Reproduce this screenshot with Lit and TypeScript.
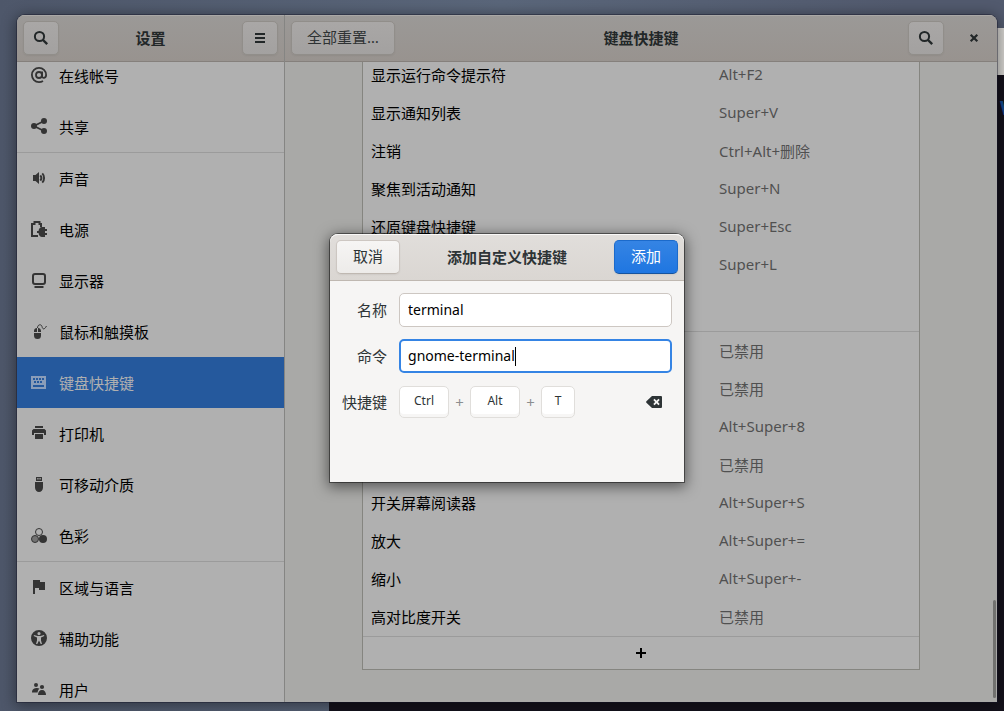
import { LitElement, html, css, svg, nothing } from "lit";
import { customElement, property } from "lit/decorators.js";

const icons: Record<string, unknown> = {
  search: svg`<circle cx="6.5" cy="6.5" r="4.6" fill="none" stroke="currentColor" stroke-width="2"/><path d="M10 10l4.2 4.2" fill="none" stroke="currentColor" stroke-width="2.4"/>`,
  menu: svg`<path d="M3 3h10v2H3zM3 7h10v2H3zM3 11h10v2H3z"/>`,
  close: svg`<path d="M4.7 4.7l6.6 6.6M11.3 4.7l-6.6 6.6" stroke="currentColor" stroke-width="2.2"/>`,
  plus: svg`<path d="M7 3h2v4h4v2H9v4H7V9H3V7h4z"/>`,
  erase: svg`<path fill-rule="evenodd" d="M6 2h9a1 1 0 011 1v10a1 1 0 01-1 1H6L.4 8.7a1 1 0 010-1.4zM7.3 6.1L9.2 8 7.3 9.9l1.3 1.3 1.9-1.9 1.9 1.9 1.3-1.3L11.8 8l1.9-1.9-1.3-1.3-1.9 1.9-1.9-1.9z"/>`,
  at: svg`<g fill="none" stroke="currentColor" stroke-width="1.8"><circle cx="8" cy="8" r="3"/><path d="M11.1 4.6v4.6c0 2.6 4 2.2 4-1.2A7.1 7.1 0 108 15.1c1.4 0 2.7-.3 4-1.1"/></g>`,
  share: svg`<circle cx="3" cy="8" r="3"/><circle cx="13" cy="3" r="3"/><circle cx="13" cy="13" r="3"/><path d="M13 3L3 8l10 5" fill="none" stroke="currentColor" stroke-width="1.8"/>`,
  sound: svg`<path d="M2 5h2.5L8 2v12l-3.500-3H2z"/><path d="M9.3 5.300c1.300 1.500 1.300 3.900 0 5.400M11.300 3.300c2.400 2.500 2.400 6.900 0 9.400" fill="none" stroke="currentColor" stroke-width="1.900"/>`,
  power: svg`<path d="M7 15H1V3h2.5V1h5v2H10v3" fill="none" stroke="currentColor" stroke-width="2"/><path d="M11 6h3v2h2v2h-2v2h2v2h-2v2h-3c-1.800 0-3-1.500-3.500-4H6v-2h1.500C8 7.500 9.200 6 11 6z"/>`,
  display: svg`<rect x="2" y="1" width="12" height="10" rx="2" fill="none" stroke="currentColor" stroke-width="2"/><path d="M4 13h8l1 1-1 1H4l-1-1z"/>`,
  mouse: svg`<path d="M6 4v4H3V7c0-1.700 1.300-3 3-3zM7 4c1.700 0 3 1.300 3 3v1H7zM3 9h7v2.500a3.500 3.500 0 01-7 0z"/><path d="M6.500 4c0-4 4-4 4.500-1.500s2 4 4.500-.5" fill="none" stroke="currentColor" stroke-width="1"/>`,
  keyboard: svg`<path fill-rule="evenodd" d="M0 1h15v13H0zM2 3v2h2V3zm3 0v2h2V3zm3 0v2h2V3zm3 0v2h2V3zM3 6v2h2V6zm3 0v2h2V6zm3 0v2h2V6zM2 10v2h11v-2z"/>`,
  printer: svg`<path d="M4 0h8v2H4zM2.500 3h11L15 4.500V9h-2V7H3v2H1V4.500zM4 8h8v5H4z"/>`,
  usb: svg`<path fill-rule="evenodd" d="M5 0h6v4H5zM6.300 1v1.400h1.200V1zm2.200 0v1.400h1.200V1zM4 5h8v5.500a4 4.500 0 01-8 0z"/>`,
  color: svg`<circle cx="8" cy="4" r="3.500" fill="none" stroke="currentColor"/><circle cx="4" cy="11" r="3.500" fill="currentColor" fill-opacity=".5" stroke="currentColor"/><circle cx="12" cy="11" r="4"/>`,
  flag: svg`<path d="M2 0h7v2h5v8H8V8H4v6H2z"/>`,
  access: svg`<path fill-rule="evenodd" d="M8 0a8 8 0 110 16A8 8 0 018 0zm0 2a1.600 1.600 0 100 3.200A1.600 1.600 0 008 2zM3 5l-.3 1L6 7.500v3L5 14h1.300L8 10.500 9.700 14H11l-1-3.500v-3L13.300 6 13 5l-3.500 1h-3z"/>`,
  users: svg`<circle cx="5" cy="3" r="2"/><circle cx="11" cy="5" r="2.1"/><path d="M1 10.500C1 7 3.500 6 6 6c1 0 2 .3 2.600.8C7.500 7.500 7 8.500 6.500 10.500z"/><path d="M7 13c0-3 1.500-5 4-5s4 2 4 5z"/>`,
};

/* Glyphs whose artwork begins one unit below the top of the grid. */
const lowered = new Set(["display", "mouse", "keyboard", "printer", "usb", "color", "flag", "users"]);

const icon = (name: string) =>
  html`<svg class="icon" viewBox=${lowered.has(name) ? "0 -1 16 16" : "0 0 16 16"} width="16" height="16" fill="currentColor" aria-hidden="true">${icons[name]}</svg>`;

const base = css`
  * { box-sizing: border-box; }
  .icon { display: block; flex: none; overflow: visible; }
  button, input { font: inherit; color: inherit; margin: 0; }
  .headerbar {
    display: grid;
    grid-template-columns: 1fr auto 1fr;
    align-items: center;
    height: 47px;
    padding: 0 6px;
    flex: none;
  }
  .headerbar h1, .headerbar h2 { margin: 0; font-size: 15px; line-height: 20px; font-weight: 700; }
  .end { justify-self: end; display: flex; gap: 13px; }
  .btn {
    height: 34px;
    min-width: 36px;
    padding: 0 9px;
    line-height: 20px;
    border-radius: 5px;
    border: 1px solid #918e8a;
    background: linear-gradient(#a9a7a6, #a3a1a0);
    box-shadow: 0 1px 2px rgba(0, 0, 0, .06);
    justify-self: start;
  }
`;

interface Panel { icon: string; label: string; first?: boolean; current?: boolean }

const panels: Panel[] = [
  { icon: "at", label: "在线帐号" },
  { icon: "share", label: "共享" },
  { icon: "sound", label: "声音", first: true },
  { icon: "power", label: "电源" },
  { icon: "display", label: "显示器" },
  { icon: "mouse", label: "鼠标和触摸板" },
  { icon: "keyboard", label: "键盘快捷键", current: true },
  { icon: "printer", label: "打印机" },
  { icon: "usb", label: "可移动介质" },
  { icon: "color", label: "色彩" },
  { icon: "flag", label: "区域与语言", first: true },
  { icon: "access", label: "辅助功能" },
  { icon: "users", label: "用户" },
];

@customElement("settings-sidebar")
export class SettingsSidebar extends LitElement {
  static styles = [base, css`
    :host { display: flex; flex-direction: column; min-height: 0; border-right: 1px solid #858583; background: #b0b0b0; }
    .headerbar { background: linear-gradient(#9b9997, #98938f); border-bottom: 1px solid #85807c; box-shadow: inset 0 1px #aaa8a6; color: #222728; }
    nav { flex: 1; min-height: 0; overflow: hidden; }
    /* The list is scrolled: its first row is partly under the header. */
    ul { list-style: none; margin: -12px 0 0; padding: 0; }
    .first { border-top: 1px solid #9b9b9b; }
    a { display: flex; align-items: center; gap: 12px; height: 51px; padding: 0 14px; color: #000; text-decoration: none; line-height: 22px; }
    a .icon { color: #343434; margin-bottom: 1px; }
    .current { background: #25599d; color: #b0b0b0; }
    .current .icon { color: #8a9db9; }
  `];
  render() {
    return html`
      <header class="headerbar">
        <button class="btn" aria-label="搜索">${icon("search")}</button>
        <h2>设置</h2>
        <div class="end"><button class="btn" aria-label="菜单">${icon("menu")}</button></div>
      </header>
      <nav>
        <ul>
          ${panels.map((p) => html`<li class=${p.first ? "first" : ""}>
            <a href="#" class=${p.current ? "current" : ""} aria-current=${p.current ? "page" : nothing}>${icon(p.icon)}<span>${p.label}</span></a>
          </li>`)}
        </ul>
      </nav>`;
  }
}

type Row = [name: string, keys: string];

const systemRows: Row[] = [
  ["显示运行命令提示符", "Alt+F2"],
  ["显示通知列表", "Super+V"],
  ["注销", "Ctrl+Alt+删除"],
  ["聚焦到活动通知", "Super+N"],
  ["还原键盘快捷键", "Super+Esc"],
  ["", "Super+L"],
];
const accessRows: Row[] = [
  ["", ""],
  ["", ""],
  ["", "Alt+Super+8"],
  ["", ""],
  ["开关屏幕阅读器", "Alt+Super+S"],
  ["放大", "Alt+Super+="],
  ["缩小", "Alt+Super+-"],
  ["高对比度开关", ""],
];

@customElement("shortcuts-panel")
export class ShortcutsPanel extends LitElement {
  static styles = [base, css`
    :host { display: flex; flex-direction: column; min-width: 0; min-height: 0; background: #a9a9a7; }
    .headerbar { background: linear-gradient(#9b9997, #98938f); border-bottom: 1px solid #85807c; box-shadow: inset 0 1px #aaa8a6; color: #222728; }
    .reset { padding: 0 15px 2px; color: #2e3233; }
    .close { min-width: 34px; padding: 0 8px; background: none; border-color: transparent; box-shadow: none; }
    .scroller { position: relative; flex: 1; min-height: 0; overflow: hidden; }
    /* Scrolled towards the end of the list. */
    .box { width: calc(100% - 48px); max-width: 558px; margin: -6px auto 0; background: #b0b0b0; border: 1px solid #858580; border-top: 0; }
    table { width: 100%; border-collapse: separate; border-spacing: 0; table-layout: fixed; }
    .keys { width: 208px; }
    td { height: 38px; padding: 0 8px; line-height: 22px; color: #000; vertical-align: middle; }
    .value { color: #505050; }
    .latin { padding-bottom: 2px; }
    .section td { height: 48px; border-bottom: 1px solid #9b9b9b; }
    .add { display: flex; justify-content: center; align-items: center; width: 100%; height: 33px; background: none; border: 0; border-top: 1px solid #9b9b9b; color: #000; }
    .thumb { position: absolute; right: 1px; bottom: 4px; width: 3px; height: 98px; border-radius: 2px; background: #71716f; }
  `];
  private row = ([name, keys]: Row) => html`<tr>
    <td>${name}</td>
    <td class=${/^[\x20-\x7e]+$/.test(keys) ? "value latin" : "value"}>${keys || "已禁用"}</td>
  </tr>`;
  render() {
    return html`
      <header class="headerbar">
        <button class="btn reset">全部重置…</button>
        <h1>键盘快捷键</h1>
        <div class="end">
          <button class="btn" aria-label="搜索">${icon("search")}</button>
          <button class="btn close" aria-label="关闭">${icon("close")}</button>
        </div>
      </header>
      <div class="scroller">
        <div class="box">
          <table>
            <colgroup><col /><col class="keys" /></colgroup>
            <tbody>${systemRows.map(this.row)}<tr class="section"><td colspan="2"></td></tr></tbody>
            <tbody>${accessRows.map(this.row)}</tbody>
          </table>
          <button class="add" aria-label="添加">${icon("plus")}</button>
        </div>
        <div class="thumb"></div>
      </div>`;
  }
}

@customElement("shortcut-dialog")
export class ShortcutDialog extends LitElement {
  @property() name = "terminal";
  @property() command = "gnome-terminal";
  @property({ attribute: false }) keys = ["Ctrl", "Alt", "T"];
  static styles = [base, css`
    :host { display: block; width: 354px; max-width: 100%; }
    .dialog {
      border-radius: 8px 8px 0 0;
      background: #f6f5f4;
      color: #2e3436;
      box-shadow: 0 0 0 1px rgba(0, 0, 0, .45), 0 3px 14px 2px rgba(0, 0, 0, .5);
    }
    .headerbar { border-radius: 8px 8px 0 0; background: linear-gradient(#e1dedb, #dad6d2); border-bottom: 1px solid #bfb8b1; box-shadow: inset 0 1px #f9f8f7; }
    .btn { padding: 0 16px 2px; border-color: #cdc7c2; border-bottom-color: #bfb8b1; background: linear-gradient(#f6f5f4, #edebe9); }
    .suggested { color: #fff; border-color: #1b6acb; border-bottom-color: #15539e; background: linear-gradient(#3584e4, #1f76e1); }
    .form { display: grid; grid-template-columns: auto 1fr; gap: 12px; align-items: center; padding: 12px 12px 63px; }
    .label { justify-self: end; line-height: 22px; }
    .field { display: flex; align-items: center; height: 34px; padding: 0 8px; background: #fff; border: 1px solid #cdc7c2; border-radius: 5px; color: #000; }
    .field input { font-size: 14px; line-height: 20px; flex: 1; min-width: 0; padding: 0; border: 0; outline: 0; background: none; }
    .focused { border: 2px solid #3584e4; padding: 0 7px; }
    .focused input { flex: none; max-width: 100%; field-sizing: content; }
    .caret { width: 1px; height: 19px; background: #000; }
    .combo { display: flex; align-items: center; height: 34px; font-size: 12px; }
    kbd {
      font: inherit; line-height: 18px; height: 32px; min-width: 34px; padding: 5px 12px 0; text-align: center;
      background: #fff; border: 1px solid #e0dedb; border-radius: 5px; box-shadow: inset 0 -3px #f7f6f5;
    }
    .wide { min-width: 50px; }
    .joint { color: #8b8e8f; font-size: 15px; line-height: 20px; width: 21px; text-align: center; }
    .clear { margin-left: auto; padding: 0 10px; height: 32px; border: 0; background: none; }
  `];
  render() {
    return html`
      <form class="dialog" role="dialog" aria-labelledby="title" @submit=${(e: Event) => e.preventDefault()}>
        <header class="headerbar">
          <button type="button" class="btn">取消</button>
          <h2 id="title">添加自定义快捷键</h2>
          <div class="end"><button class="btn suggested">添加</button></div>
        </header>
        <div class="form">
          <label class="label" for="name">名称</label>
          <div class="field"><input id="name" type="text" .value=${this.name} /></div>
          <label class="label" for="command">命令</label>
          <div class="field focused"><input id="command" type="text" .value=${this.command} /><span class="caret"></span></div>
          <span class="label">快捷键</span>
          <div class="combo">
            ${this.keys.map((k, i) => html`${i ? html`<span class="joint">+</span>` : nothing}<kbd class=${k.length > 1 ? "wide" : ""}>${k}</kbd>`)}
            <button type="button" class="clear" aria-label="清除快捷键">${icon("erase")}</button>
          </div>
        </div>
      </form>`;
  }
}

@customElement("app-root")
export class AppRoot extends LitElement {
  static styles = [base, css`
    :host {
      display: block;
      font-family: "Noto Sans", "Noto Sans CJK SC", sans-serif;
      font-size: 15px;
    }
    .desktop {
      position: relative;
      display: flex;
      height: 100vh;
      padding: 15px 7px 9px 17px;
      overflow: hidden;
      background: linear-gradient(90deg, #4e576a, #5a667a 50%, #525a6e 90%);
    }
    /* Terminal window that lies behind the settings window. */
    .terminal { position: absolute; left: 329px; top: 28px; right: -40px; bottom: -40px; background: #14111b; }
    .terminal-bar { height: 47px; background: #d6d4d1; }
    .prompt { position: absolute; right: 28px; top: 70px; width: 16px; font: 700 20px/20px "Noto Sans", sans-serif; color: #12488b; }
    .window {
      position: relative;
      flex: 1;
      min-width: 0;
      display: grid;
      grid-template-columns: 268px minmax(0, 1fr);
      grid-template-rows: minmax(0, 1fr);
      border-radius: 8px 8px 0 0;
      box-shadow: 0 0 0 1px rgba(20, 20, 40, .4), 0 2px 14px 2px rgba(0, 0, 0, .4);
    }
    .window > settings-sidebar { border-radius: 8px 0 0 0; overflow: hidden; }
    .window > shortcuts-panel { border-radius: 0 8px 0 0; overflow: hidden; }
    .modal { position: absolute; inset: 0; display: flex; align-items: center; justify-content: center; padding-bottom: 1px; }
  `];
  render() {
    return html`
      <div class="desktop">
        <div class="terminal"><div class="terminal-bar"></div><span class="prompt">W</span></div>
        <main class="window">
          <settings-sidebar></settings-sidebar>
          <shortcuts-panel></shortcuts-panel>
          <div class="modal"><shortcut-dialog></shortcut-dialog></div>
        </main>
      </div>`;
  }
}
